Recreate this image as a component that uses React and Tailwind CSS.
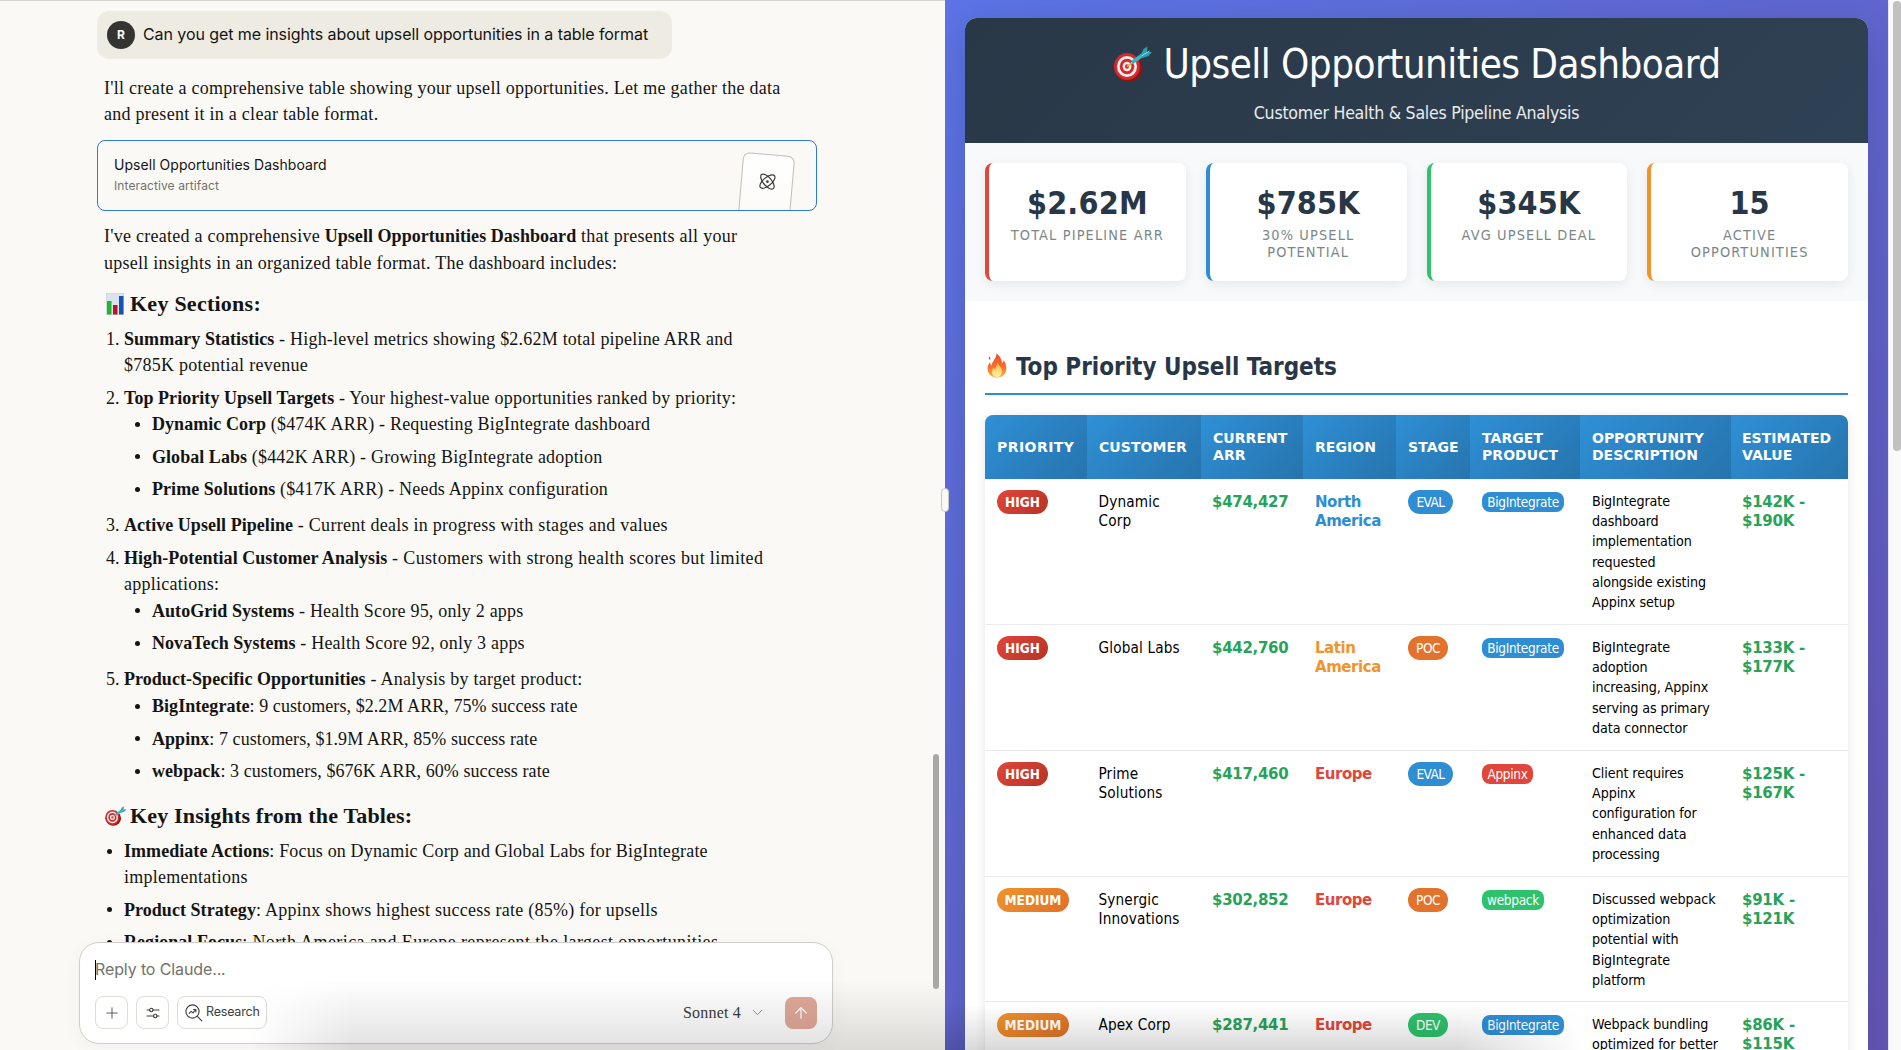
import { Atom, Plus, ArrowUp, ChevronDown } from "lucide-react";

const SERIF = "font-['Liberation_Serif',serif]";
const WIDE = "font-['DejaVu_Sans',sans-serif] [font-stretch:normal] font-bold";

const B = ({ children }) => <b className="font-bold tracking-[0.05px]">{children}</b>;

function Line({ children, className = "" }) {
  return <div className={`whitespace-nowrap h-[26.4px] leading-[26.4px] ${className}`}>{children}</div>;
}

function Bullet({ gap, children }) {
  return (
    <li className={`flex h-[26.4px] items-center whitespace-nowrap leading-[26.4px] ${gap ? "mt-[6px]" : ""}`}>
      <span className="mr-[12px] size-[5px] shrink-0 rounded-full bg-[#141413]" />
      <span>{children}</span>
    </li>
  );
}

function Item({ n, h, children }) {
  return (
    <li className={`flex ${h}`}>
      <span className="w-[20px] shrink-0 pl-[2px] leading-[26.4px] tracking-normal whitespace-nowrap">{n}.</span>
      <div>{children}</div>
    </li>
  );
}

function ChartIcon() {
  return (
    <svg width="19" height="22" viewBox="0 0 19 22" className="mr-[5px] ml-[2px]">
      <rect x="0.5" y="0.5" width="17" height="21" fill="#dbe4ee" stroke="#b9c6d3" strokeWidth=".5" />
      <rect x="1" y="8" width="4.500" height="13.500" fill="#1fb52c" />
      <rect x="7" y="12" width="4.500" height="9.500" fill="#b5171d" />
      <rect x="13" y="3" width="4.500" height="18.500" fill="#1454b4" />
    </svg>
  );
}

function Target({ className }) {
  return (
    <svg viewBox="0 0 40 36" className={className}>
      <ellipse cx="16" cy="22" rx="14" ry="13.5" fill="#8d1216" />
      <ellipse cx="14.5" cy="20.5" rx="13" ry="13.5" fill="#d42a2b" />
      <ellipse cx="14.5" cy="20.5" rx="10" ry="10.5" fill="#f6eeee" />
      <ellipse cx="14.5" cy="20.5" rx="7.3" ry="7.7" fill="#d42a2b" />
      <ellipse cx="14.5" cy="20.5" rx="4.4" ry="4.8" fill="#f6eeee" />
      <ellipse cx="14.5" cy="20.5" rx="2" ry="2.2" fill="#d42a2b" />
      <path d="M14.5 20.5 26 12" stroke="#e3b04b" strokeWidth="1.6" />
      <path d="M21 15.5 30 9" stroke="#35b6c4" strokeWidth="4" strokeLinecap="round" />
      <path d="M28 10 31 3 35 .5 34.5 6 39.5 6 36 10 30 12z" fill="#2f9fae" />
      <path d="M29 10 37 5" stroke="#8fe4ea" strokeWidth="1" />
    </svg>
  );
}

function Flame() {
  return (
    <svg viewBox="0 0 20 25" className="ml-[2px] h-[25px] w-[20px]">
      <defs>
        <linearGradient id="flame" x1="0" y1="0" x2="0" y2="1">
          <stop offset="0" stopColor="#f0462b" />
          <stop offset=".55" stopColor="#fb6f2c" />
          <stop offset="1" stopColor="#ffb03a" />
        </linearGradient>
        <linearGradient id="core" x1="0" y1="0" x2="0" y2="1">
          <stop offset="0" stopColor="#ffb02e" />
          <stop offset="1" stopColor="#fff6b0" />
        </linearGradient>
      </defs>
      <path d="M9.5.5C13 3 15 6.500 15 10c1-.5 1.500-1.500 1.500-3C19 10 20 14 19 18c-1.200 4.500-5 6.500-9 6.500S1.500 22 .7 17.500C0 14 1.500 11 3 9c.2 1.800.6 2.800 1.600 3.400C5 8 9.500 6 9.500.5z" fill="url(#flame)" />
      <path d="M10.500 9c.3 3 4.500 5 4.500 9.500 0 3.500-2.300 5.500-5 5.500s-5-1.900-5-5c0-2 1-3.500 1.800-4.500.3 1 .7 1.500 1.400 1.700C8.500 13.500 10.500 12 10.500 9z" fill="url(#core)" />
      <path d="M2 3.500c1.500 1 1.500 2.500 1 3.500C1.500 6 1.500 5 2 3.500z" fill="#f0462b" />
    </svg>
  );
}

function SlidersIcon() {
  return (
    <svg width="14" height="12" viewBox="0 0 14 12" fill="none" stroke="#3d3d3a" strokeWidth="1.100" strokeLinecap="round">
      <path d="M1 3h2.600M7 3h6M1 9h6.600M11 9h2" />
      <circle cx="5.300" cy="3" r="1.700" />
      <circle cx="9.300" cy="9" r="1.700" />
    </svg>
  );
}

function ResearchIcon() {
  return (
    <svg width="18" height="18" viewBox="0 0 18 18" fill="none" stroke="#3d3d3a" strokeWidth="1.100" strokeLinecap="round" strokeLinejoin="round">
      <circle cx="7.500" cy="7.500" r="6.600" />
      <path d="M12.300 12.300 16.800 16.800M4.200 9.300 6.200 7.300 8 8.800 10.800 5.600M8.600 5.500H10.900V7.700" />
    </svg>
  );
}

function Chat() {
  return (
    <section className="relative h-full w-[945px] shrink-0 overflow-hidden border-t border-[#d6d5cf] bg-[#faf9f5]">
      <div className={`ml-[97px] w-[720px] pt-[10px] text-[#141413] ${SERIF}`}>
        <div className="flex h-[48px] w-[575px] items-center rounded-[12px] bg-[#eeebe2] pl-[10px] font-['Inter',sans-serif]">
          <span className="flex size-[28px] items-center justify-center rounded-full bg-[#343432] text-[12px] font-bold text-white">R</span>
          <span className="relative -top-px ml-[8px] whitespace-nowrap text-[16px] tracking-[-0.08px]">Can you get me insights about upsell opportunities in a table format</span>
        </div>

        <div className="px-[7px] pt-[16px] text-[18px] tracking-[0.27px]">
          <Line>I'll create a comprehensive table showing your upsell opportunities. Let me gather the data</Line>
          <Line>and present it in a clear table format.</Line>
        </div>

        <div className="mt-[12.2px] flex h-[71px] w-[720px] overflow-hidden rounded-[8px] border border-[#2c7bd6] pl-[16px] font-['Inter',sans-serif]">
          <div className="flex-1 pt-[14px]">
            <div className="text-[14px] leading-[20px] tracking-[0.05px]">Upsell Opportunities Dashboard</div>
            <div className="mt-[2px] text-[12px] leading-[18px] tracking-[0.1px] text-[#73726c]">Interactive artifact</div>
          </div>
          <div className="mt-[13px] mr-[24px] flex h-[76px] w-[52px] shrink-0 rotate-[5deg] justify-center rounded-[7px] border border-[#c0bfb9] bg-gradient-to-b from-white to-[#faf9f5] pt-[17px]">
            <Atom size={19} strokeWidth={1.500} className="text-[#3d3d3a]" />
          </div>
        </div>

        <div className="px-[7px] pt-[12.500px] text-[18px] tracking-[0.26px]">
          <Line>I've created a comprehensive <B>Upsell Opportunities Dashboard</B> that presents all your</Line>
          <Line>upsell insights in an organized table format. The dashboard includes:</Line>

          <h3 className="mt-[11.700px] flex h-[32px] items-center text-[22px] font-bold tracking-[0.25px]"><ChartIcon />Key Sections:</h3>

          <ol className="mt-[6px]">
            <Item n="1" h="h-[59px]">
              <Line className="tracking-[0.21px]"><B>Summary Statistics</B> - High-level metrics showing $2.62M total pipeline ARR and</Line>
              <Line>$785K potential revenue</Line>
            </Item>
            <Item n="2" h="h-[127px]">
              <Line className="tracking-[0.22px]"><B>Top Priority Upsell Targets</B> - Your highest-value opportunities ranked by priority:</Line>
              <ul className="pl-[11px] tracking-[0.19px]">
                <Bullet><B>Dynamic Corp</B> ($474K ARR) - Requesting BigIntegrate dashboard</Bullet>
                <Bullet gap><B>Global Labs</B> ($442K ARR) - Growing BigIntegrate adoption</Bullet>
                <Bullet gap><B>Prime Solutions</B> ($417K ARR) - Needs Appinx configuration</Bullet>
              </ul>
            </Item>
            <Item n="3" h="h-[33px]">
              <Line><B>Active Upsell Pipeline</B> - Current deals in progress with stages and values</Line>
            </Item>
            <Item n="4" h="h-[121px]">
              <Line className="tracking-[0.34px]"><B>High-Potential Customer Analysis</B> - Customers with strong health scores but limited</Line>
              <Line>applications:</Line>
              <ul className="pl-[11px] tracking-[0.2px]">
                <Bullet><B>AutoGrid Systems</B> - Health Score 95, only 2 apps</Bullet>
                <Bullet gap><B>NovaTech Systems</B> - Health Score 92, only 3 apps</Bullet>
              </ul>
            </Item>
            <Item n="5" h="h-[119px]">
              <Line><B>Product-Specific Opportunities</B> - Analysis by target product:</Line>
              <ul className="pt-[1px] pl-[11px] tracking-[0.07px]">
                <Bullet><B>BigIntegrate</B>: 9 customers, $2.2M ARR, 75% success rate</Bullet>
                <Bullet gap><B>Appinx</B>: 7 customers, $1.9M ARR, 85% success rate</Bullet>
                <Bullet gap><B>webpack</B>: 3 customers, $676K ARR, 60% success rate</Bullet>
              </ul>
            </Item>
          </ol>

          <h3 className="mt-[15px] flex h-[32px] items-center text-[22px] font-bold tracking-[0.18px]"><Target className="mr-[3px] h-[20px] w-[23px]" />Key Insights from the Tables:</h3>
          <ul className="mt-[6px] pl-[3px]">
            <Bullet><span className="tracking-[0.16px]"><B>Immediate Actions</B>: Focus on Dynamic Corp and Global Labs for BigIntegrate</span></Bullet>
            <Line className="pl-[17px]">implementations</Line>
            <Bullet gap><B>Product Strategy</B>: Appinx shows highest success rate (85%) for upsells</Bullet>
            <Bullet gap><span className="tracking-[0.38px]"><B>Regional Focus</B>: North America and Europe represent the largest opportunities</span></Bullet>
          </ul>
        </div>
      </div>

      <div className="absolute top-[941px] left-[79px] h-[102px] w-[754px] rounded-[20px] border border-[#cfcec8] bg-white font-['Inter',sans-serif] shadow-[0_4px_20px_rgba(0,0,0,0.035)]">
        <div className="flex h-[53px] items-center pl-[15px]">
          <span className="h-[20px] w-px bg-black" />
          <span className="relative -top-px -ml-px text-[16px] tracking-[-0.12px] text-[#73726c]">Reply to Claude...</span>
        </div>
        <div className="flex items-center gap-[8px] pl-[15px] text-[#3d3d3a]">
          <span className="flex size-[33px] items-center justify-center rounded-[8px] border border-[#dddcd7]"><Plus size={18} strokeWidth={1.1} /></span>
          <span className="flex size-[33px] items-center justify-center rounded-[8px] border border-[#dddcd7]"><SlidersIcon /></span>
          <span className="flex h-[33px] w-[90px] items-center gap-[3px] rounded-[8px] border border-[#dddcd7] pl-[7px] text-[12.5px] tracking-[-0.2px]"><ResearchIcon />Research</span>
          <span className={`ml-[408px] w-[58px] text-[16px] tracking-[0.2px] whitespace-nowrap ${SERIF}`}>Sonnet 4</span>
          <ChevronDown size={17} strokeWidth={1.1} className="text-[#73726c]" />
          <span className="ml-[11px] flex size-[32px] items-center justify-center rounded-[8px] bg-[#e0a999] text-white"><ArrowUp size={18} strokeWidth={1.700} /></span>
        </div>
      </div>

      <div className="absolute bottom-0 left-[250px] h-[70px] w-[695px] bg-gradient-to-b from-transparent to-black/12 [mask-image:linear-gradient(to_right,transparent,black_15%)]" />
      <div className="absolute top-[753px] right-[6px] h-[235px] w-[6px] rounded-full bg-[#a9a8a5]" />
    </section>
  );
}

const STATS = [
  ["$2.62M", ["TOTAL PIPELINE ARR"], "border-[#e0463b]"],
  ["$785K", ["30% UPSELL", "POTENTIAL"], "border-[#2e8dd3]"],
  ["$345K", ["AVG UPSELL DEAL"], "border-[#2dc26b]"],
  ["15", ["ACTIVE", "OPPORTUNITIES"], "border-[#f0942a]"],
];

const HEAD = [["PRIORITY"], ["CUSTOMER"], ["CURRENT", "ARR"], ["REGION"], ["STAGE"], ["TARGET", "PRODUCT"], ["OPPORTUNITY", "DESCRIPTION"], ["ESTIMATED", "VALUE"]];

const HEAD_TRACKING = {
  PRIORITY: "tracking-[0.45px]",
  OPPORTUNITY: "tracking-[-0.02px]",
  ESTIMATED: "-ml-px tracking-[0.05px]",
};

const C = {
  HIGH: "w-[51px] bg-linear-135 from-[#e0463b] to-[#b83227]",
  MEDIUM: "w-[72px] bg-linear-135 from-[#f0942a] to-[#e0702a]",
  EVAL: "w-[45px] bg-[#2e8dd3]",
  POC: "w-[40px] bg-[#e2722c]",
  DEV: "w-[40px] bg-[#2dc26b]",
  BigIntegrate: "w-[82px] bg-[#2e8dd3]",
  Appinx: "w-[51px] bg-[#e0463b]",
  webpack: "w-[62px] bg-[#2dc26b]",
  blue: "text-[#2e8dd3]",
  orange: "text-[#f0942a]",
  red: "text-[#e0463b]",
};

const ROWS = [
  ["h-[146px]", "HIGH", ["Dynamic", "Corp"], "$474,427", ["North", "America"], "blue", "EVAL", "BigIntegrate", ["BigIntegrate", "dashboard", "implementation", "requested", "alongside existing", "Appinx setup"], ["$142K -", "$190K"]],
  ["h-[126px]", "HIGH", ["Global Labs"], "$442,760", ["Latin", "America"], "orange", "POC", "BigIntegrate", ["BigIntegrate", "adoption", "increasing, Appinx", "serving as primary", "data connector"], ["$133K -", "$177K"]],
  ["h-[126px]", "HIGH", ["Prime", "Solutions"], "$417,460", ["Europe"], "red", "EVAL", "Appinx", ["Client requires", "Appinx", "configuration for", "enhanced data", "processing"], ["$125K -", "$167K"]],
  ["h-[125px]", "MEDIUM", ["Synergic", "Innovations"], "$302,852", ["Europe"], "red", "POC", "webpack", ["Discussed webpack", "optimization", "potential with", "BigIntegrate", "platform"], ["$91K -", "$121K"]],
  ["h-[126px]", "MEDIUM", ["Apex Corp"], "$287,441", ["Europe"], "red", "DEV", "BigIntegrate", ["Webpack bundling", "optimized for better"], ["$86K -", "$115K"]],
];

const GRID = "grid grid-cols-[102px_114px_102px_93px_74px_110px_151px_117px]";

const Lines = ({ t, className = "" }) => (
  <div className={className}>{t.map((s) => <div key={s} className="whitespace-nowrap">{s}</div>)}</div>
);

function Dashboard() {
  return (
    <section className="h-full w-[943px] shrink-0 overflow-hidden bg-linear-[135deg,#5b74e6,#6a4498] bg-[length:100%_2300px] bg-no-repeat px-[20px] pt-[18px] font-['DejaVu_Sans_Condensed','DejaVu_Sans',sans-serif] [font-stretch:condensed]">
      <div className="h-[1100px] rounded-t-[12px] bg-white shadow-[0_10px_40px_rgba(0,0,0,0.15)]">
        <header className="flex h-[125px] flex-col items-center rounded-t-[12px] bg-linear-135 from-[#293847] to-[#2f4154] text-white">
          <h1 className="mt-[20px] flex h-[52px] items-center text-[40px] tracking-[-0.55px] whitespace-nowrap">
            <Target className="mr-[10px] h-[36px] w-[41px]" />Upsell Opportunities Dashboard
          </h1>
          <p className="mt-[11px] text-[17.6px] leading-[24px] tracking-[-0.25px] text-white/90">Customer Health &amp; Sales Pipeline Analysis</p>
        </header>

        <div className="grid h-[158px] grid-cols-4 gap-[20px] bg-[#f7f9fa] p-[20px]">
          {STATS.map(([v, l, c]) => (
            <div key={v} className={`h-[118px] rounded-[8px] border-l-4 bg-white pt-[20px] text-center shadow-[0_3px_12px_rgba(0,0,0,0.08)] ${c}`}>
              <div className="text-[32px] leading-[40px] font-bold tracking-[0.2px] text-[#283747]">{v}</div>
              <Lines t={l} className="mt-[4px] text-[14.4px] leading-[17px] tracking-[1.15px] text-[#7a8788]" />
            </div>
          ))}
        </div>

        <div className="px-[20px] pt-[45px]">
          <h2 className="flex h-[49px] items-start gap-[9px] border-b-2 border-[#2e8dd3] pt-[7px] text-[24px] leading-[28px] font-bold tracking-[0px] text-[#283747]"><Flame />Top Priority Upsell Targets</h2>
          <div className="mt-[20px] rounded-t-[8px] shadow-[0_2px_12px_rgba(0,0,0,0.1)]">
            <div className={`${GRID} h-[64px] overflow-hidden rounded-t-[8px]`}>
              {HEAD.map((h) => (
                <div key={h[0]} className="flex items-center bg-linear-135 from-[#2f90d6] to-[#2674ad] pl-[12px]">
                  <Lines t={h} className={`${WIDE} text-[14px] leading-[17px] text-white ${HEAD_TRACKING[h[0]] || "tracking-[0.05px]"}`} />
                </div>
              ))}
            </div>
            {ROWS.map(([h, p, name, arr, reg, rc, st, prod, desc, est]) => (
              <div key={arr} className={`${GRID} ${h} border-b border-[#e8eaeb] bg-white pt-[11px] pl-[12px] text-[15px] leading-[19px] text-black`}>
                <div><span className={`flex h-[24px] items-center justify-center rounded-full text-[13.500px] font-bold tracking-[0px] text-white ${C[p]}`}>{p}</span></div>
                <Lines t={name} className="-ml-[0.5px] pt-[3px] text-[15.2px] tracking-[0.15px]" />
                <div className={`-ml-px pt-[3px] tracking-[-0.3px] text-[#27a25b] ${WIDE}`}>{arr}</div>
                <Lines t={reg} className={`pt-[3px] tracking-[-0.45px] ${WIDE} ${C[rc]}`} />
                <div><span className={`flex h-[24px] items-center justify-center rounded-full text-[13.500px] tracking-[-0.5px] text-white ${C[st]}`}>{st}</span></div>
                <div><span className={`mt-[2px] flex h-[20px] items-center justify-center rounded-[8px] text-[13.500px] tracking-[-0.3px] text-white ${C[prod]}`}>{prod}</span></div>
                <Lines t={desc} className="pt-[1px] text-[14.2px] leading-[20.2px] tracking-[-0.1px]" />
                <Lines t={est} className={`-ml-px pt-[3px] tracking-[-0.25px] text-[#27a25b] ${WIDE}`} />
              </div>
            ))}
          </div>
        </div>
      </div>
    </section>
  );
}

export default function App() {
  return (
    <main className="relative flex h-[1050px] w-[1901px] overflow-hidden bg-[#faf9f5]">
      <Chat />
      <Dashboard />
      <div className="flex h-full w-[13px] justify-end border-l border-[#e5e5e5] bg-[#fafafa]">
        <div className="mt-px h-[450px] w-[8px] rounded-full bg-[#c1c1c1]" />
      </div>
      <div className="absolute top-[488px] left-[941px] h-[24px] w-[8px] rounded-[4px] border border-[#c9c7c0] bg-[#faf9f5]" />
      <div className="absolute bottom-0 left-[945px] h-[45px] w-[640px] bg-gradient-to-b from-transparent to-black/15 [mask-image:linear-gradient(to_right,black_80%,transparent)]" />
    </main>
  );
}
